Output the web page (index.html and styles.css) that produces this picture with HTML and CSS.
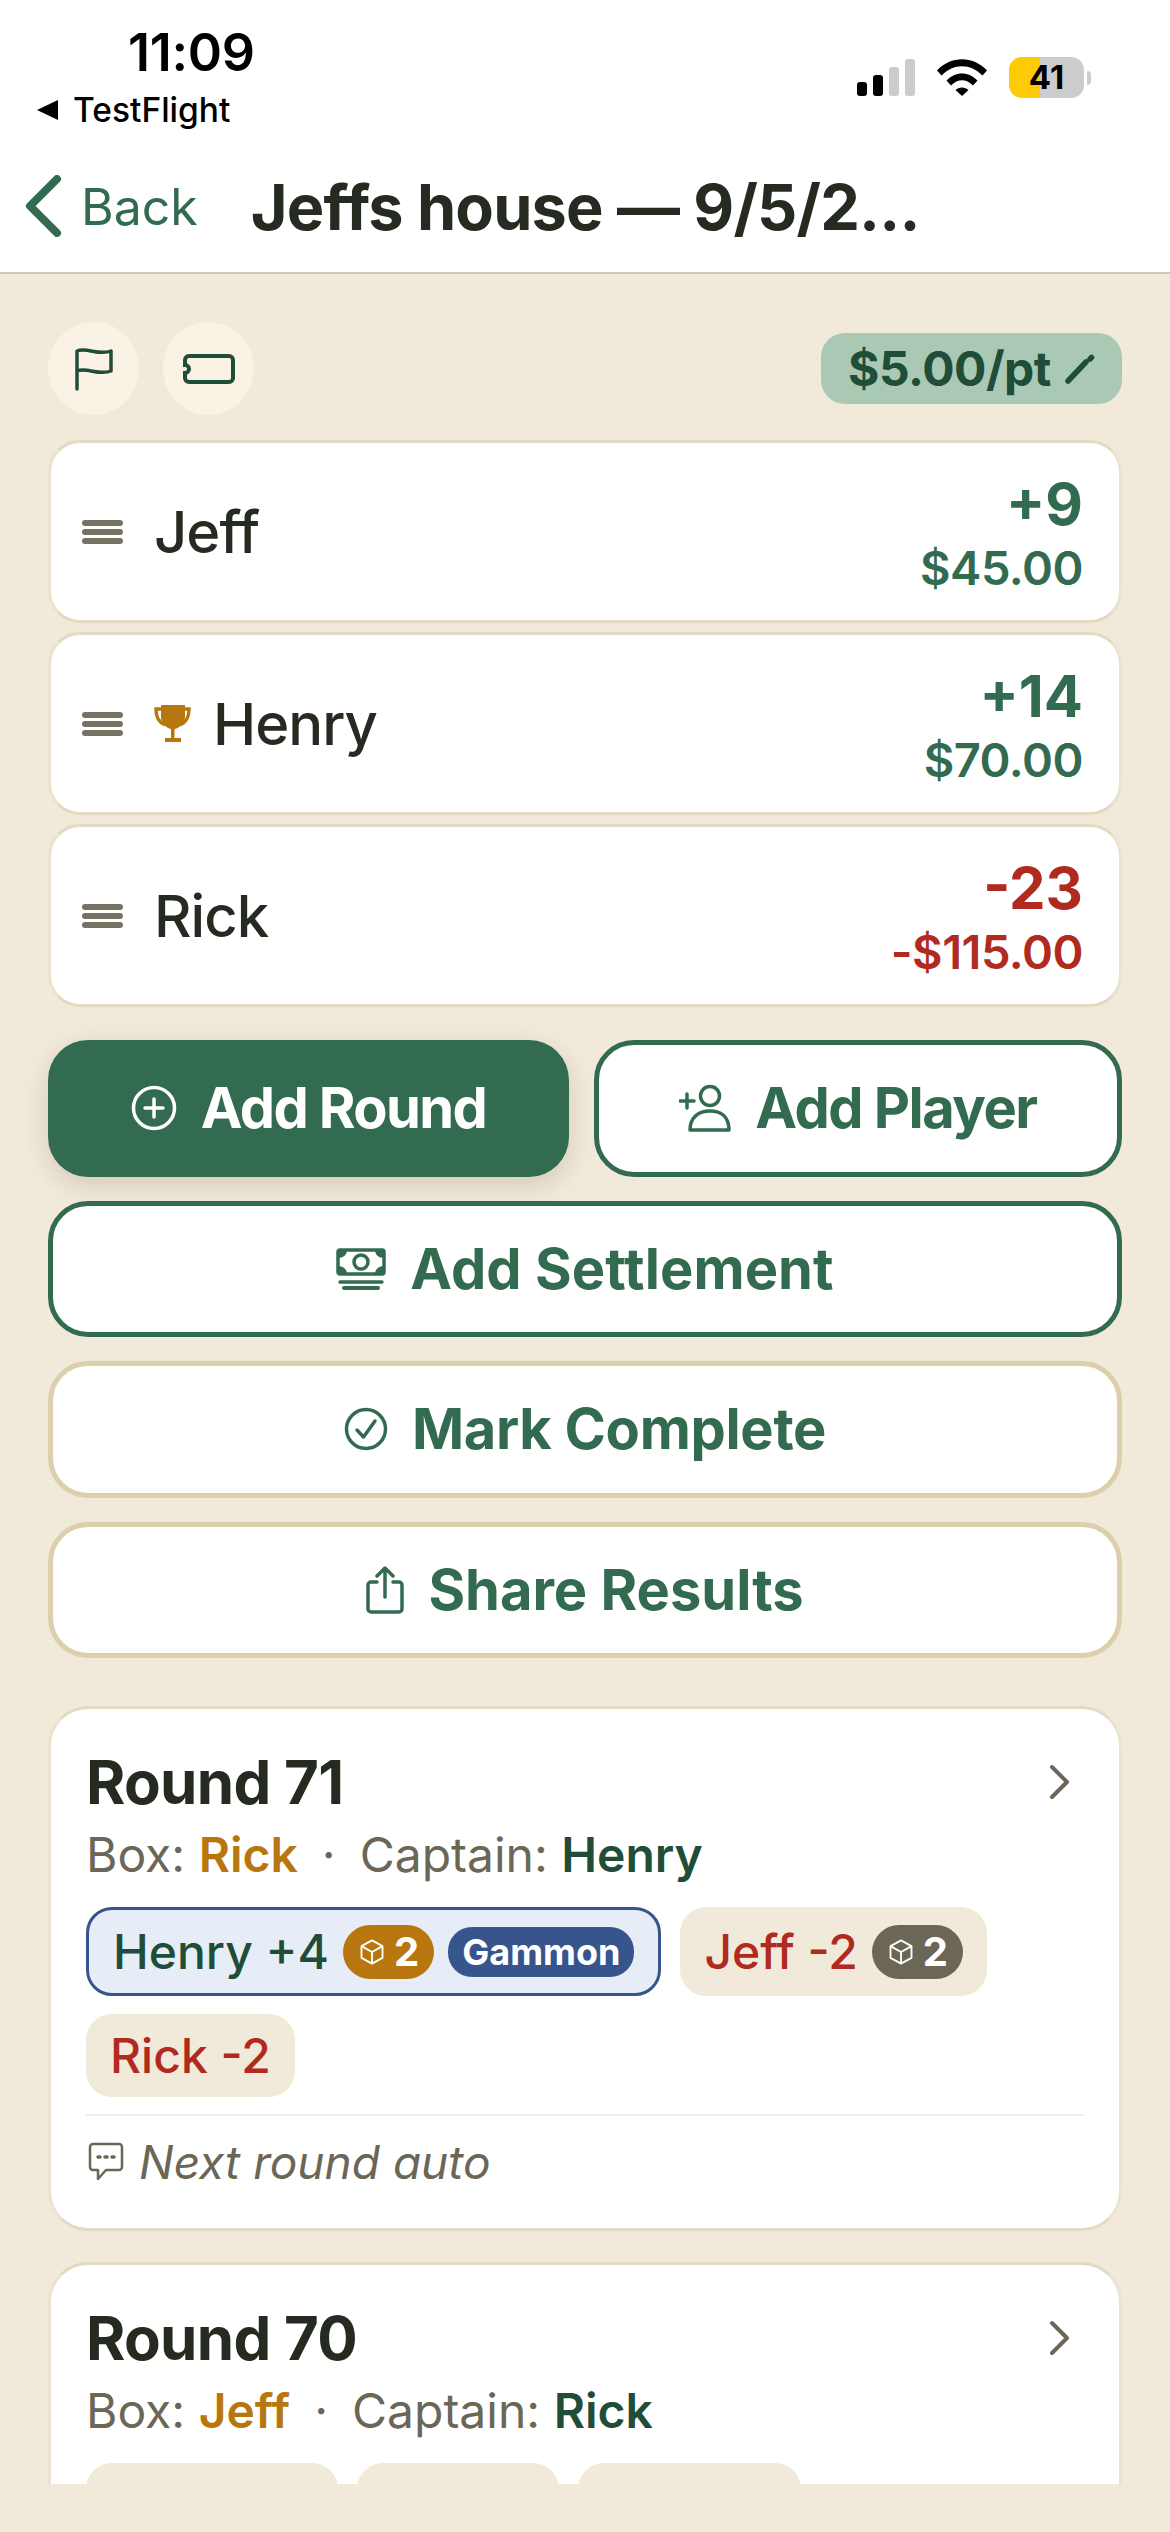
FILE: index.html
```html
<!DOCTYPE html>
<html lang="en">
<head>
    <meta charset="UTF-8">
    <title>Jeffs house</title>
    <link rel="stylesheet" href="styles.css">
</head>
<body>
<div class="screen">
    <div class="top">
        <div class="status">
            <div class="status-left">
                <div class="time">11:09</div>
                <div class="testflight"><span class="tri"></span>TestFlight</div>
            </div>
            <div class="status-right">
                <div class="signal"><i class="on s1"></i><i class="on s2"></i><i class="s3"></i><i class="s4"></i></div>
                <svg class="wifi" viewBox="0 0 50 37"><path d="M0 11.500C14-3.500 36-3.500 50 11.500L45.500 16.500C33.500 4 16.500 4 4.500 16.500Z"/><path d="M9.500 21.500C18.500 12 31.500 12 40.500 21.500L36 26.500C29 19.500 21 19.500 14 26.500Z"/><path d="M18.500 31C22 27.500 28 27.500 31.500 31L25 37Z"/></svg>
                <div class="battery"><span>41</span></div>
                <i class="nub"></i>
            </div>
        </div>
        <div class="nav">
            <svg class="back-icon" viewBox="0 0 38 62"><path d="M33 4L6 31L33 58" fill="none" stroke="#326b50" stroke-width="8" stroke-linecap="round" stroke-linejoin="round"/></svg>
            <span class="back">Back</span>
            <span class="title">Jeffs house — 9/5/2...</span>
        </div>
    </div>

    <div class="content">
        <div class="tools">
            <div class="round-btn">
                <svg width="38" height="44" viewBox="0 0 38 44"><path d="M2 42V4C12 0 24 9 36 4V24C24 29 12 20 2 24" fill="none" stroke="#1f4d38" stroke-width="3.500" stroke-linecap="round" stroke-linejoin="round"/></svg>
            </div>
            <div class="round-btn">
                <svg width="52" height="30" viewBox="0 0 52 30"><path d="M6 2H46A4 4 0 0 1 50 6V24A4 4 0 0 1 46 28H6A4 4 0 0 1 2 24V19A4 4 0 0 0 2 11V6A4 4 0 0 1 6 2Z" fill="none" stroke="#1f4d38" stroke-width="4"/></svg>
            </div>
            <div class="rate">$5.00/pt
                <svg width="30" height="30" viewBox="0 0 30 30"><path d="M3 27L21 8" fill="none" stroke="#1f4d38" stroke-width="5.500" stroke-linecap="round"/><path d="M25 5L26.500 3.500" fill="none" stroke="#1f4d38" stroke-width="5.500" stroke-linecap="round"/></svg>
            </div>
        </div>

        <div class="players">
            <div class="player">
                <div class="handle"><i></i><i></i><i></i></div>
                <span class="name">Jeff</span>
                <div class="score up"><b>+9</b><span>$45.00</span></div>
            </div>
            <div class="player">
                <div class="handle"><i></i><i></i><i></i></div>
                <svg class="trophy" width="37" height="38" viewBox="0 0 37 38"><path d="M7 0H31V12C31 18 26 23 20.500 24V33H27V37H11V33H17V24C12 23 7 18 7 12Z" fill="#b8770e"/><path d="M7 4H2C2 12 4 17 11 20M31 4H35C35 12 33 17 26 20" fill="none" stroke="#b8770e" stroke-width="3.500"/></svg>
                <span class="name">Henry</span>
                <div class="score up"><b>+14</b><span>$70.00</span></div>
            </div>
            <div class="player">
                <div class="handle"><i></i><i></i><i></i></div>
                <span class="name">Rick</span>
                <div class="score down"><b>-23</b><span>-$115.00</span></div>
            </div>
        </div>

        <div class="actions">
            <div class="action-row">
                <div class="btn solid add-round">
                    <svg width="46" height="46" viewBox="0 0 46 46"><g fill="none" stroke="#fff" stroke-width="3.500" stroke-linecap="round"><circle cx="23" cy="23" r="20.500"/><path d="M23 14V32M14 23H32"/></g></svg>
                    Add Round
                </div>
                <div class="btn green add-player">
                    <svg width="52" height="48" viewBox="0 0 52 48"><g fill="none" stroke="#326b50" stroke-width="3.500" stroke-linecap="round" stroke-linejoin="round"><circle cx="31" cy="12" r="9.500"/><path d="M11 46C11 33 20 27 31 27C42 27 50 33 50 46Z"/><path d="M8 10V24M1 17H15"/></g></svg>
                    Add Player
                </div>
            </div>
            <div class="btn green settle">
                <svg width="50" height="42" viewBox="0 0 50 42"><g fill="none" stroke="#326b50" stroke-width="3.500"><rect x="2" y="2" width="46" height="24" rx="2"/><circle cx="25" cy="14" r="7"/><path d="M4 34H46" stroke-linecap="round"/><path d="M8 40H42" stroke-width="4" stroke-linecap="round"/></g><path d="M2 2H11C11 7 7 10 2 10ZM48 2H39C39 7 43 10 48 10ZM2 26H11C11 21 7 18 2 18ZM48 26H39C39 21 43 18 48 18Z" fill="#326b50"/></svg>
                Add Settlement
            </div>
            <div class="btn tan complete">
                <svg width="44" height="44" viewBox="0 0 44 44"><g fill="none" stroke="#326b50" stroke-width="3.500" stroke-linecap="round" stroke-linejoin="round"><circle cx="22" cy="22" r="19.500"/><path d="M13 23L19.500 30L31 14"/></g></svg>
                Mark Complete
            </div>
            <div class="btn tan share">
                <svg width="38" height="48" viewBox="0 0 38 48"><g fill="none" stroke="#326b50" stroke-width="3.500" stroke-linecap="round" stroke-linejoin="round"><path d="M11 16H5A3 3 0 0 0 2 19V43A3 3 0 0 0 5 46H33A3 3 0 0 0 36 43V19A3 3 0 0 0 33 16H27"/><path d="M19 31V2M11 10L19 2L27 10"/></g></svg>
                Share Results
            </div>
        </div>

        <div class="round">
            <div class="round-head">
                <h2>Round 71</h2>
                <svg class="chev" width="22" height="36" viewBox="0 0 22 36"><path d="M3 3L18 18L3 33" fill="none" stroke="#6b6656" stroke-width="4" stroke-linecap="round" stroke-linejoin="round"/></svg>
            </div>
            <div class="meta">Box: <b class="gold">Rick</b><span class="dot">·</span>Captain: <b class="dark">Henry</b></div>
            <div class="chips">
                <div class="chip winner">Henry +4
                    <span class="dice gold-bg"><svg class="cube" viewBox="0 0 24 24"><path d="M12 2L21 7V17L12 22L3 17V7ZM3 7L12 12L21 7M12 12V22"/></svg>2</span>
                    <span class="gammon">Gammon</span>
                </div>
                <div class="chip loser">Jeff -2
                    <span class="dice grey-bg"><svg class="cube" viewBox="0 0 24 24"><path d="M12 2L21 7V17L12 22L3 17V7ZM3 7L12 12L21 7M12 12V22"/></svg>2</span>
                </div>
                <div class="chip loser plain">Rick -2</div>
            </div>
            <div class="note">
                <svg width="36" height="40" viewBox="0 0 36 40"><path d="M5 2H31A3 3 0 0 1 34 5V25A3 3 0 0 1 31 28H18L10 37V28H5A3 3 0 0 1 2 25V5A3 3 0 0 1 5 2Z" fill="none" stroke="#6b6656" stroke-width="2.500" stroke-linejoin="round"/><path d="M10 15H12M17 15H19M24 15H26" stroke="#6b6656" stroke-width="3.500" stroke-linecap="round"/></svg>
                <em>Next round auto</em>
            </div>
        </div>

        <div class="round">
            <div class="round-head">
                <h2>Round 70</h2>
                <svg class="chev" width="22" height="36" viewBox="0 0 22 36"><path d="M3 3L18 18L3 33" fill="none" stroke="#6b6656" stroke-width="4" stroke-linecap="round" stroke-linejoin="round"/></svg>
            </div>
            <div class="meta">Box: <b class="gold">Jeff</b><span class="dot">·</span>Captain: <b class="dark">Rick</b></div>
            <div class="chips">
                <div class="chip loser plain c1"></div>
                <div class="chip loser plain c2"></div>
                <div class="chip loser plain c3"></div>
            </div>
        </div>
    </div>
</div>
</body>
</html>
```

FILE: styles.css
```css
* {
    box-sizing: border-box;
}

body {
    margin: 0;
    background: #f1e9d9;
    font-family: Inter, "Liberation Sans", sans-serif;
    color: #262b22;
}

.screen {
    width: 1170px;
    height: 2532px;
    overflow: hidden;
    background: #f1e9d9;
}

.top {
    background: #fff;
    border-bottom: 2px solid #cfc8b8;
}

.status {
    height: 141px;
    display: flex;
    justify-content: space-between;
}

.status-left {
    padding: 22px 0 0 37px;
}

.time {
    margin-left: 91px;
    font-size: 52px;
    line-height: 61px;
    font-weight: 600;
    color: #000;
    letter-spacing: -0.3px;
}

.testflight {
    margin-top: 2px;
    display: flex;
    align-items: center;
    font-size: 33.500px;
    line-height: 50px;
    font-weight: 500;
    color: #000;
}

.tri {
    width: 0;
    height: 0;
    border-style: solid;
    border-width: 10px 21px 10px 0;
    border-color: transparent #000 transparent transparent;
    margin-right: 15px;
}

.status-right {
    display: flex;
    align-items: flex-start;
    padding: 57px 79px 0 0;
}

.signal {
    display: flex;
    align-items: flex-end;
    gap: 6px;
    height: 37px;
    margin-top: 2px;
}

.signal i {
    display: block;
    width: 10px;
    border-radius: 3px;
    background: #ccc;
}

.signal .on {
    background: #000;
}

.s1 { height: 14px; }
.s2 { height: 21px; }
.s3 { height: 29px; }
.s4 { height: 37px; }

.wifi {
    width: 50px;
    height: 37px;
    margin: 2px 22px 0 22px;
}

.battery {
    width: 75px;
    height: 41px;
    border-radius: 13px;
    background: linear-gradient(to right, #fccb05 41%, #cccccc 41%);
    text-align: center;
    font-size: 33px;
    line-height: 41px;
    font-weight: 700;
    color: #000;
}

.nub {
    width: 4px;
    height: 14px;
    margin: 14px 0 0 3px;
    border-radius: 0 4px 4px 0;
    background: #ccc;
}

.nav {
    height: 131px;
    display: flex;
    align-items: center;
    padding-left: 24px;
}

.back-icon {
    width: 38px;
    height: 62px;
    margin-bottom: 2px;
}

.back {
    margin-left: 19px;
    font-size: 50px;
    color: #326b50;
}

.title {
    margin-left: 53px;
    font-size: 63px;
    font-weight: 700;
    letter-spacing: -0.8px;
}

.content {
    height: 2210px;
    margin-bottom: 48px;
    padding: 48px 48px 0;
    overflow: hidden;
}

.tools {
    display: flex;
    align-items: center;
    gap: 24px;
}

.round-btn {
    width: 91px;
    height: 93px;
    border-radius: 50%;
    background: #f9f2e5;
    display: flex;
    align-items: center;
    justify-content: center;
}

.rate {
    margin-left: auto;
    height: 71px;
    width: 301px;
    border-radius: 24px;
    background: #a9c9b5;
    display: flex;
    align-items: center;
    justify-content: center;
    gap: 14px;
    font-size: 48px;
    font-weight: 700;
    letter-spacing: -0.5px;
    color: #1f4d38;
}

.players {
    margin-top: 25px;
    display: flex;
    flex-direction: column;
    gap: 9px;
}

.player {
    height: 183px;
    background: #fff;
    border: 3px solid #e5dcc6;
    border-color: #e3dac4 #ebe3d0;
    border-radius: 32px;
    display: flex;
    align-items: center;
    padding: 0 36px 0 31px;
}

.handle {
    width: 41px;
    margin-right: 31px;
    display: flex;
    flex-direction: column;
    gap: 3px;
}

.handle i {
    display: block;
    height: 6px;
    border-radius: 3px;
    background: #777161;
}

.trophy {
    margin-right: 22px;
}

.name {
    font-size: 58px;
    font-weight: 500;
    letter-spacing: -1px;
}

.score {
    margin-left: auto;
    text-align: right;
    display: flex;
    flex-direction: column;
}

.score b {
    font-size: 58px;
    line-height: 72px;
    font-weight: 700;
}

.score span {
    font-size: 47px;
    line-height: 56px;
    font-weight: 600;
    letter-spacing: -0.5px;
}

.up { color: #326b50; }
.down { color: #b02a20; }

.actions {
    margin-top: 33px;
    display: flex;
    flex-direction: column;
    gap: 24px;
}

.action-row {
    display: flex;
    gap: 25px;
}

.btn {
    height: 136.500px;
    border-radius: 40px;
    background: #fff;
    display: flex;
    align-items: center;
    justify-content: center;
    gap: 24px;
    font-size: 56px;
    font-weight: 700;
    color: #326b50;
}

.btn.green {
    border: 5px solid #326b50;
}

.btn.tan {
    border: 5px solid #dccfac;
}

.btn.solid {
    background: #326b50;
    color: #fff;
    box-shadow: 0 8px 24px rgba(60, 50, 30, 0.16);
}

.add-round {
    width: 521px;
    letter-spacing: -1.600px;
}

.add-player {
    flex: 1;
    letter-spacing: -1.500px;
}

.settle {
    letter-spacing: 0.1px;
}

.complete {
    letter-spacing: -0.3px;
}

.share {
    letter-spacing: 0;
}

.round {
    margin-top: 31px;
    background: #fff;
    border: 3px solid #e5dcc6;
    border-color: #e3dac4 #ebe3d0;
    border-radius: 40px;
    padding: 35px 35px 0;
}

.actions + .round {
    margin-top: 48px;
}

.round-head {
    display: flex;
    justify-content: space-between;
    align-items: center;
    padding-right: 13px;
}

.round-head h2 {
    margin: 0;
    font-size: 60px;
    line-height: 76px;
    font-weight: 700;
    letter-spacing: -0.7px;
}

.meta {
    margin-top: 7px;
    font-size: 48px;
    line-height: 56px;
    color: #6b6656;
}

.meta b {
    font-weight: 600;
}

.gold { color: #b8770e; }
.dark { color: #1f4d38; }

.dot {
    margin: 0 24px;
}

.chips {
    margin-top: 24px;
    display: flex;
    flex-wrap: wrap;
    gap: 18px 19px;
}

.chip {
    height: 89px;
    padding: 0 24px;
    border-radius: 26px;
    display: flex;
    align-items: center;
    gap: 14px;
    font-size: 48px;
    font-weight: 500;
}

.chip.winner {
    background: #e7edf6;
    border: 3px solid #37558c;
    color: #1f4d38;
}

.chip.loser {
    background: #f1e9d9;
    color: #b02a20;
}

.dice {
    height: 54px;
    padding: 0 15px;
    border-radius: 27px;
    display: flex;
    align-items: center;
    gap: 8px;
    color: #fff;
    font-size: 40px;
    font-weight: 700;
}

.gold-bg { background: #b8770e; }
.grey-bg { background: #6b6656; }

.cube {
    width: 28px;
    height: 28px;
    fill: none;
    stroke: #fff;
    stroke-width: 1.600;
    stroke-linejoin: round;
}

.gammon {
    height: 50px;
    padding: 0 14px;
    border-radius: 24px;
    background: #37558c;
    color: #fff;
    display: flex;
    align-items: center;
    font-size: 36px;
    font-weight: 700;
}

.chip.plain {
    height: 83px;
}

.c1 { width: 252px; }
.c2 { width: 202px; }
.c3 { width: 223px; }

.note {
    margin-top: 17px;
    border-top: 2px solid #f1ede2;
    height: 114px;
    padding-bottom: 20px;
    display: flex;
    align-items: center;
    gap: 15px;
    color: #6b6656;
    font-size: 46px;
}

.note svg {
    margin-left: 2px;
}
```
